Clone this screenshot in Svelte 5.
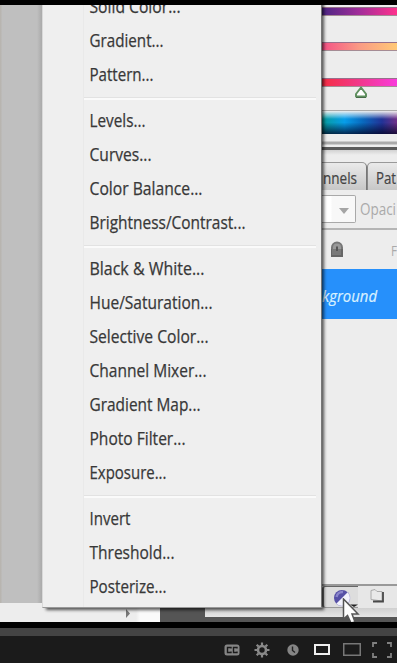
<script>
  const groups = [
    [
      { label: "Solid Color...", width: 91 },
      { label: "Gradient...", width: 74 },
      { label: "Pattern...", width: 64 },
    ],
    [
      { label: "Levels...", width: 56 },
      { label: "Curves...", width: 62 },
      { label: "Color Balance...", width: 113 },
      { label: "Brightness/Contrast...", width: 156 },
    ],
    [
      { label: "Black & White...", width: 115 },
      { label: "Hue/Saturation...", width: 123 },
      { label: "Selective Color...", width: 119 },
      { label: "Channel Mixer...", width: 117 },
      { label: "Gradient Map...", width: 111 },
      { label: "Photo Filter...", width: 96 },
      { label: "Exposure...", width: 77 },
    ],
    [
      { label: "Invert", width: 41 },
      { label: "Threshold...", width: 85 },
      { label: "Posterize...", width: 77 },
    ],
  ];
</script>

<div class="player">
  <div class="video">
    <div class="workspace">
      <div class="document">
        <div class="canvas"></div>
        <div class="scrollbar">
          <svg class="scroll-arrow" width="6" height="12" viewBox="0 0 6 12">
            <path d="M1 1 L5 5.500 L1 10z" fill="#777" />
          </svg>
        </div>
      </div>

      <div class="panel">
        <div class="sliders">
          <div class="track purple"></div>
          <div class="track peach"></div>
          <div class="track pink"></div>
          <svg class="handle" width="14" height="13" viewBox="0 0 14 13">
            <path d="M7 1.500 L12 8 V10.500 H2 V8z" fill="#fff" stroke="#609060" stroke-width="2" stroke-linejoin="round" />
            <path d="M2 11.500 H12" stroke="#476b48" />
          </svg>
          <div class="spectrum"></div>
        </div>
        <div class="tabs">
          <span class="tab first">
            <svg width="36" height="26"><text x="0" y="21" textLength="34" lengthAdjust="spacingAndGlyphs">nnels</text></svg>
          </span>
          <span class="tab">
            <svg width="21" height="26"><text x="-1" y="21" textLength="20" lengthAdjust="spacingAndGlyphs">Pat</text></svg>
          </span>
        </div>
        <div class="options">
          <div class="select">
            <svg width="10" height="6" viewBox="0 0 10 6"><path d="M0 0H10L5 6z" fill="#a5a5a5" /></svg>
          </div>
          <svg class="opacity" width="37" height="30"><text x="0" y="21" textLength="36" lengthAdjust="spacingAndGlyphs">Opaci</text></svg>
        </div>
        <div class="lock-row">
          <svg width="14" height="17" viewBox="0 0 14 17">
            <path d="M2 8 V6.500 A5 5 0 0 1 12 6.500 V8" fill="#999" stroke="#777" stroke-width="2" />
            <path d="M1 8H13V16H1z" fill="#666" />
            <path d="M2 9H11M2 11H11M2 13H11" stroke="#8d8d8d" />
            <path d="M7 5.500V10" stroke="#555" stroke-width="2" />
          </svg>
          <svg class="fill" width="6" height="20"><text x="0" y="16" textLength="6" lengthAdjust="spacingAndGlyphs">F</text></svg>
        </div>
        <div class="layer">
          <svg width="58" height="30"><text x="0" y="21" textLength="55" lengthAdjust="spacingAndGlyphs">kground</text></svg>
        </div>
        <div class="layers-empty"></div>
        <div class="tools">
          <div class="adjust">
            <svg width="36" height="22" viewBox="0 0 36 22">
              <circle cx="20" cy="12" r="8" fill="#5650a6" />
              <path d="M14.300 17.700 L25.700 6.300 A8 8 0 0 1 14.300 17.700z" fill="#f2f2fc" stroke="#b7b5dc" stroke-width="0.500" />
              <path d="M14.500 11 A6 6 0 0 1 21 6" stroke="#8b86cb" stroke-width="2.500" fill="none" />
              <path d="M28 18.500H36L32 21z" fill="#222" />
            </svg>
          </div>
          <svg class="folder" width="16" height="16" viewBox="0 0 16 16">
            <path d="M2 2.500 L6 1.500 L8 3.500 H13 V13 L2 11.500z" fill="#e9e9e9" stroke="#aaa" />
            <path d="M14 4 V13.500 H4" fill="none" stroke="#484848" stroke-width="1.800" />
          </svg>
        </div>
      </div>
    </div>

    <div class="window-edge"></div>

    <ul class="menu">
      {#each groups as group, i}
        {#if i > 0}
          <li class="separator"></li>
        {/if}
        {#each group as item}
          <li class="item">
            <svg width="200" height="34">
              <text x="0.5" y="23" textLength={item.width} lengthAdjust="spacingAndGlyphs">{item.label}</text>
            </svg>
          </li>
        {/each}
      {/each}
    </ul>

    <svg class="cursor" width="18" height="26" viewBox="0 0 18 26">
      <path d="M1.500 1 V21 L5.500 17.500 L9 25 L13 24 L10 16 H16z" fill="#fff" stroke="#555" stroke-width="1.500" />
    </svg>
  </div>

  <div class="progress"></div>

  <div class="controls">
    <svg class="cc" width="16" height="12" viewBox="0 0 16 12">
      <rect x="0.500" y="0.500" width="15" height="11" rx="2.500" fill="#858585" />
      <path d="M7 4.500 V3.500 H3.500 V8.500 H7 V7.500 M13 4.500 V3.500 H9.500 V8.500 H13 V7.500" fill="none" stroke="#1b1b1b" stroke-width="1.400" />
    </svg>
    <svg class="gear" width="16" height="16" viewBox="0 0 16 16">
      <circle cx="8" cy="8" r="4" fill="none" stroke="#898989" stroke-width="2.600" />
      <path d="M8 0.500V3M8 13V15.500M0.500 8H3M13 8H15.500M2.700 2.700L4.500 4.500M11.500 11.500L13.300 13.300M13.300 2.700L11.500 4.500M4.500 11.500L2.700 13.300" stroke="#898989" stroke-width="2.200" />
    </svg>
    <svg class="clock" width="12" height="12" viewBox="0 0 12 12">
      <circle cx="6" cy="6" r="5.700" fill="#858585" />
      <path d="M5.500 2.500V6.500L8 8.500" fill="none" stroke="#222" stroke-width="1.400" />
    </svg>
    <svg class="small-view" width="16" height="11" viewBox="0 0 16 11">
      <rect x="1" y="1" width="14" height="9" fill="none" stroke="#efefef" stroke-width="2" />
    </svg>
    <svg class="large-view" width="18" height="13" viewBox="0 0 18 13">
      <rect x="0.750" y="0.750" width="16.500" height="11.500" fill="none" stroke="#777" stroke-width="1.500" />
    </svg>
    <svg class="full-view" width="20" height="16" viewBox="0 0 20 16">
      <path d="M5 1H1V5M15 1H19V5M1 11V15H5M19 11V15H15" fill="none" stroke="#808080" stroke-width="1.800" />
    </svg>
  </div>
</div>

<style>
:global(body) {
  background: #fff;
}

.player {
  width: 397px;
  height: 663px;
  background: #000;
  font-family: "Open Sans", "Noto Sans", sans-serif;
}

svg {
  display: block;
  flex: none;
}

.video {
  position: relative;
  height: 617px;
  border-top: 5px solid #000;
  border-bottom: 6px solid #000;
  overflow: hidden;
  background: #555;
}

.workspace {
  display: flex;
  height: 603px;
}

.document {
  display: flex;
  flex-direction: column;
  width: 322px;
  height: 617px;
}

.canvas {
  flex: 1;
  background: linear-gradient(90deg, #b8b5b0 0 1px, #bfbfbf 2px 37px, #aaa 42px);
}

.scrollbar {
  display: flex;
  align-items: center;
  width: 160px;
  height: 19px;
  box-sizing: border-box;
  padding-top: 3px;
  background: linear-gradient(90deg, #ededed 0 136px, #fafafa 140px);
}

.scroll-arrow {
  margin-left: 125px;
}

.panel {
  display: flex;
  flex-direction: column;
  width: 75px;
  background: #ededed;
}

.sliders {
  display: flex;
  flex-direction: column;
  height: 145px;
  box-sizing: border-box;
  padding-top: 2px;
  border-bottom: 3px solid #5b5b5b;
  background: linear-gradient(#ededed 0 136px, #aaa 137px 139px, #ededed 140px);
}

.track {
  height: 9px;
  flex: none;
  box-sizing: border-box;
  border-top: 1px solid #97708c;
  border-bottom: 1px solid #a58c95;
}

.purple {
  background: linear-gradient(90deg, #4b2683, #a22d9a 50%, #ff328d);
}

.peach {
  margin-top: 26px;
  background: linear-gradient(90deg, #f45186, #fa9b85 50%, #ffc977);
}

.pink {
  margin-top: 27px;
  background: linear-gradient(90deg, #f52d43, #f1388b 50%, #f93bdc);
}

.handle {
  margin: -1px 0 0 32px;
}

.spectrum {
  height: 24px;
  margin-top: 11px;
  box-sizing: border-box;
  border-top: 1px solid #aaa;
  background:
    linear-gradient(#ededed 0, rgba(255, 255, 255, 0.4) 20%, transparent 35% 50%, rgba(0, 0, 30, 0.75) 100%),
    linear-gradient(90deg, #079c9a, #079de9 30%, #0968bd 55%, #223397 80%, #703087);
}

.tabs {
  display: flex;
  height: 40px;
  box-sizing: border-box;
  padding-top: 12px;
  background: linear-gradient(#d2d2d2, #ededed 5px 12px, #d0d0d0);
}

.tab {
  flex: none;
  box-sizing: border-box;
  width: 30px;
  height: 28px;
  padding-left: 9px;
  border-top: 1px solid #999;
  border-left: 1px solid #888;
  border-radius: 5px 0 0 0;
  background: linear-gradient(#eaeaea, #c7c7c7);
}

.tab.first {
  width: 45px;
  padding-left: 1px;
  border-left: 0;
  border-right: 1px solid #777;
  border-radius: 0 5px 0 0;
}

.tab svg {
  overflow: visible;
}

.tab text {
  font-size: 17px;
  fill: #444;
  stroke: #444;
  stroke-width: 0.2px;
}

.options {
  display: flex;
  align-items: center;
  height: 40px;
  box-sizing: border-box;
  border-bottom: 2px solid #b5b5b5;
}

.select {
  display: flex;
  align-items: center;
  justify-content: flex-end;
  flex: none;
  width: 34px;
  height: 28px;
  box-sizing: border-box;
  padding: 3px 6px 0 0;
  border: 1px solid #a9a9a9;
  border-left: 0;
  border-radius: 0 2px 2px 0;
  background: linear-gradient(90deg, #fff 9px, #f8f8f8 10px);
}

.opacity {
  margin-left: 4px;
}

.opacity text,
.fill text {
  font-size: 16px;
  fill: #aaa;
}

.fill text {
  font-size: 15px;
}

.lock-row {
  display: flex;
  align-items: center;
  height: 39px;
  padding-left: 8px;
}

.fill {
  margin-left: 47px;
}

.layer {
  display: flex;
  align-items: center;
  height: 50px;
  background: #2690fb;
}

.layer svg {
  margin-top: 3px;
}

.layer text {
  font-size: 16px;
  font-style: italic;
  fill: #d9f1ff;
  stroke: #d9f1ff;
  stroke-width: 0.2px;
}

.layers-empty {
  flex: 1;
}

.tools {
  display: flex;
  height: 24px;
  box-sizing: border-box;
  border-top: 2px solid #999;
  background: #e7e7e7;
}

.adjust {
  width: 36px;
  height: 22px;
  box-sizing: border-box;
  border-top: 1px solid #666;
  border-left: 2px solid #666;
  border-bottom: 1px solid #999;
  border-radius: 3px 0 0 3px;
  background: #ddd;
}

.adjust svg {
  margin: -1px 0 0 -2px;
}

.folder {
  margin: 2px 0 0 11px;
}

.window-edge {
  width: 192px;
  height: 9px;
  margin-left: 205px;
  background: linear-gradient(#d0d0d0, #e5e5e5);
}

.menu {
  position: absolute;
  top: -15px;
  left: 42px;
  width: 280px;
  height: 618px;
  box-sizing: border-box;
  margin: 0;
  padding: 0;
  list-style: none;
  border: 1px solid #999;
  border-top: 0;
  border-right-color: #777;
  border-left-color: #d9d9d9;
  background: linear-gradient(90deg, #efefef 40px, #e9e9e9 40px 41px, #efefef 41px);
  box-shadow: 3px 3px 3px -1px rgba(0, 0, 0, 0.65);
}

.item {
  height: 34px;
  padding-left: 46px;
}

.item text {
  font-size: 17.5px;
  fill: #383838;
  stroke: #383838;
  stroke-width: 0.25px;
}

.separator {
  height: 12px;
  margin: 0 5px 0 41px;
  background: linear-gradient(transparent 5px, #e2e2e2 5px 6px, #fafafa 6px 8px, transparent 8px);
}

.cursor {
  position: absolute;
  top: 593px;
  left: 342px;
}

.progress {
  height: 8px;
  background: #444;
}

.controls {
  display: flex;
  align-items: center;
  height: 27px;
  padding-left: 224px;
  background: #1b1b1b;
}

.gear {
  margin-left: 14px;
}

.clock {
  margin-left: 17px;
}

.small-view {
  margin-left: 15px;
}

.large-view {
  margin-left: 13px;
}

.full-view {
  margin-left: 11px;
}
</style>
